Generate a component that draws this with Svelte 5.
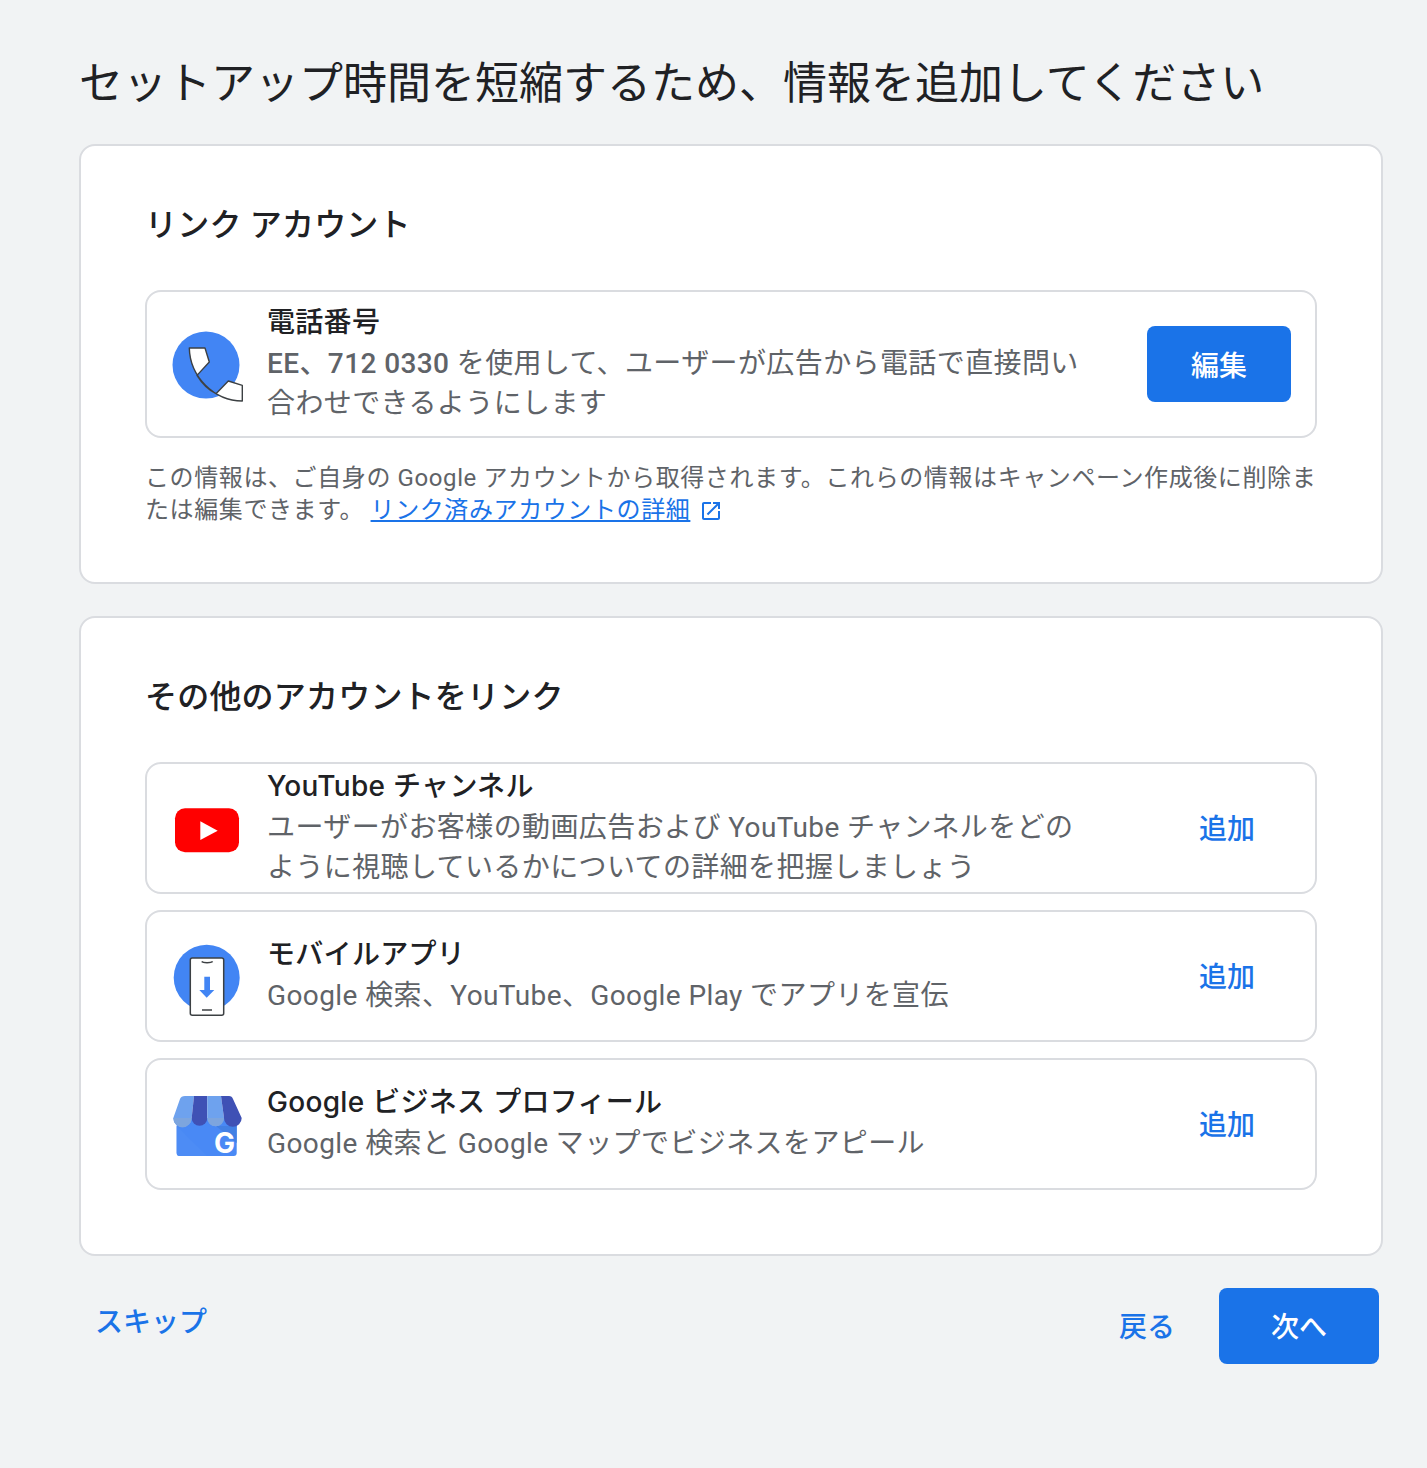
<script>
    const others = [
        { id: 'youtube', title: 'YouTube チャンネル', text: 'ユーザーがお客様の動画広告および YouTube チャンネルをどのように視聴しているかについての詳細を把握しましょう' },
        { id: 'app', title: 'モバイルアプリ', text: 'Google 検索、YouTube、Google Play でアプリを宣伝' },
        { id: 'gmb', title: 'Google ビジネス プロフィール', text: 'Google 検索と Google マップでビジネスをアピール' }
    ];
</script>

<div class="page">
    <h1>セットアップ時間を短縮するため、情報を追加してください</h1>

    <section class="card first">
        <h2>リンク アカウント</h2>
        <div class="row phone">
            <svg class="icon" viewBox="0 0 72 72" aria-hidden="true">
                <circle cx="34" cy="37" r="33.5" fill="#4285f4" />
                <path d="M17.3 20H33L37.3 34 25 47.4C30 55.7 36 61.7 44 65.7L56.3 53 70.3 57.4V73C42 72.7 18 48.7 17.3 20Z" fill="#fff" stroke="#3c4043" stroke-width="1.4" stroke-linejoin="round" />
            </svg>
            <div class="text">
                <h3>電話番号</h3>
                <p><b>EE、712 0330</b> を使用して、ユーザーが広告から電話で直接問い合わせできるようにします</p>
            </div>
            <button class="edit">編集</button>
        </div>
        <p class="note">この情報は、ご自身の Google アカウントから取得されます。これらの情報はキャンペーン作成後に削除または編集できます。 <a href="#details">リンク済みアカウントの詳細</a>
            <svg class="ext" viewBox="0 0 24 24" aria-hidden="true"><path d="M19 19H5V5h7V3H5c-1.11 0-2 .9-2 2v14c0 1.1.89 2 2 2h14c1.1 0 2-.9 2-2v-7h-2v7zM14 3v2h3.59l-9.83 9.83 1.41 1.41L19 6.41V10h2V3h-7z" fill="#1a73e8" /></svg>
        </p>
    </section>

    <section class="card second">
        <h2>その他のアカウントをリンク</h2>
        <div class="rows">
            {#each others as item}
            <div class="row">
                {#if item.id === 'youtube'}
                <svg class="icon" viewBox="0 0 72 72" aria-hidden="true">
                    <rect x="3" y="16.3" width="64" height="44" rx="10" fill="#f00" />
                    <path d="M28.3 29.3 45.7 38.7 28.3 48Z" fill="#fff" />
                </svg>
                {:else if item.id === 'app'}
                <svg class="icon" viewBox="0 0 72 72" aria-hidden="true">
                    <circle cx="34.7" cy="37.7" r="33" fill="#4285f4" />
                    <rect x="18.3" y="18" width="33.4" height="57.3" rx="2" fill="#fff" stroke="#3c4043" stroke-width="1.5" />
                    <path d="M29.7 21.5C31 23 39 23 40.7 21.5" fill="none" stroke="#3c4043" stroke-width="1.5" />
                    <path d="M30 70H40" stroke="#3c4043" stroke-width="1.5" />
                    <path d="M32.3 36.7H38V50H42.3L34.7 57.7 27.3 50H32.3Z" fill="#4285f4" />
                </svg>
                {:else}
                <svg class="icon" viewBox="0 0 72 72" aria-hidden="true">
                    <path d="M4.7 30H64.7V65Q64.7 68 61.7 68H7.7Q4.7 68 4.7 65Z" fill="#4989f5" />
                    <path d="M4.7 38H64.7V55L44 38Z" fill="#4280e4" />
                    <path d="M4.7 38 35 68H7.7Q4.7 68 4.7 65Z" fill="#4d8cf5" />
                    <path d="M13 8H22L19.7 30A9.2 9.2 0 0 1 1.3 30L8 11Q9 8 13 8Z" fill="#6ea2ee" />
                    <path d="M22 8H35.3V30A7.8 7.8 0 0 1 19.7 30Z" fill="#3f51b5" />
                    <path d="M35.3 8H49L52 30A8.35 8.35 0 0 1 35.3 30Z" fill="#6ea2ee" />
                    <path d="M49 8H57Q60 8 61 11L69.7 30A8.85 8.85 0 0 1 52 30Z" fill="#3f51b5" />
                    <path d="M1.3 30A9.2 9.2 0 0 0 19.7 30Z" fill="#7da5de" />
                    <path d="M35.3 30A8.35 8.35 0 0 0 52 30Z" fill="#7da5de" />
                    <text x="52.5" y="64.5" class="g">G</text>
                </svg>
                {/if}
                <div class="text">
                    <h3>{item.title}</h3>
                    <p>{item.text}</p>
                </div>
                <button class="add">追加</button>
            </div>
            {/each}
        </div>
    </section>

    <div class="footer">
        <button class="skip">スキップ</button>
        <div class="right">
            <button class="back">戻る</button>
            <button class="next">次へ</button>
        </div>
    </div>
</div>

<style>
    :global(body) {
        margin: 0;
        background: #f1f3f4;
    }

    .page {
        box-sizing: border-box;
        height: 1468px;
        padding: 54px 44px 0 79px;
        font-family: Roboto, "Noto Sans CJK JP", sans-serif;
        color: #202124;
    }

    h1 {
        margin: 0 0 30px;
        font-size: 44px;
        line-height: 60px;
        font-weight: 400;
    }

    .card {
        box-sizing: border-box;
        background: #fff;
        border: 2px solid #dadce0;
        border-radius: 16px;
        padding: 0 64px;
    }

    .first {
        height: 440px;
        margin-bottom: 32px;
    }

    .second {
        height: 640px;
        margin-bottom: 32px;
    }

    h2 {
        margin: 59px 0 45px;
        font-size: 32px;
        line-height: 40px;
        font-weight: 500;
        letter-spacing: 0.2px;
    }

    .rows {
        display: flex;
        flex-direction: column;
        gap: 16px;
    }

    .row {
        display: flex;
        align-items: center;
        box-sizing: border-box;
        height: 132px;
        padding: 0 16px 0 25px;
        border: 2px solid #dadce0;
        border-radius: 16px;
    }

    .row.phone {
        height: 148px;
        padding-right: 24px;
    }

    .icon {
        flex: none;
        width: 72px;
        height: 72px;
        margin-right: 23px;
        overflow: visible;
    }

    .g {
        font-family: Inter, sans-serif;
        font-size: 28px;
        font-weight: 700;
        fill: #fff;
        text-anchor: middle;
    }

    .text {
        width: 820px;
        margin-bottom: 2px;
    }

    h3 {
        margin: 0;
        font-family: Inter, "Noto Sans CJK JP", sans-serif;
        font-size: 28px;
        line-height: 40px;
        font-weight: 500;
        letter-spacing: 0.3px;
    }

    .text p {
        margin: 2px 0 0;
        font-size: 28px;
        line-height: 40px;
        letter-spacing: 0.4px;
        color: #5f6368;
    }

    .text b {
        font-weight: 500;
    }

    button {
        border: none;
        background: none;
        font: inherit;
        font-size: 28px;
        font-weight: 500;
        color: #1a73e8;
        cursor: pointer;
    }

    .edit {
        margin-left: auto;
        width: 144px;
        height: 76px;
        border-radius: 8px;
        background: #1a73e8;
        color: #fff;
    }

    .add {
        margin-left: auto;
        width: 144px;
        height: 76px;
        padding-bottom: 4px;
    }

    .note {
        margin: 24px 0 0;
        font-size: 24px;
        line-height: 32px;
        letter-spacing: 0.6px;
        color: #5f6368;
    }

    .note a {
        color: #1a73e8;
    }

    .ext {
        width: 24px;
        height: 24px;
        margin-left: 2px;
        vertical-align: -5px;
    }

    .footer {
        display: flex;
        justify-content: space-between;
        align-items: flex-start;
        padding-right: 4px;
    }

    .skip {
        padding: 15px 16px 11px;
        line-height: 40px;
    }

    .right {
        display: flex;
        gap: 20px;
        align-items: center;
    }

    .back {
        padding: 0 24px 2px 26px;
    }

    .next {
        width: 160px;
        height: 76px;
        padding-bottom: 4px;
        border-radius: 8px;
        background: #1a73e8;
        color: #fff;
    }
</style>
